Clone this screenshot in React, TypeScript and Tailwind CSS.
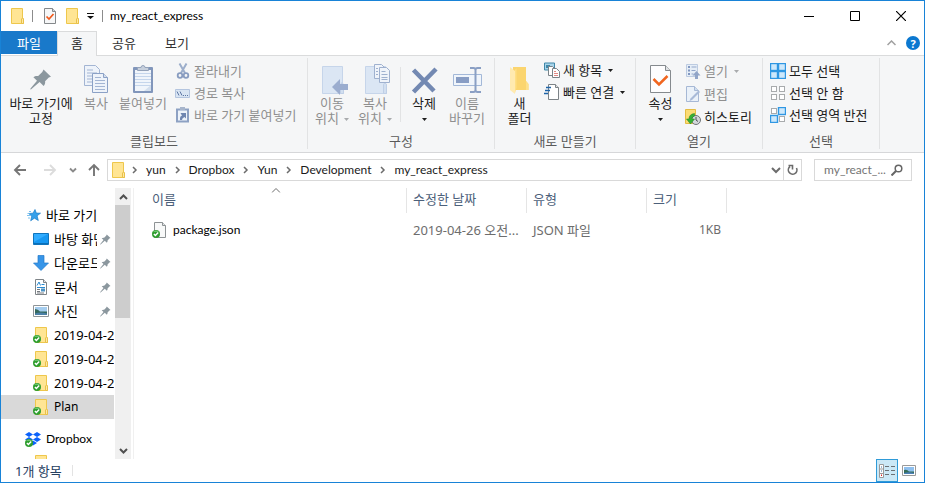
import React from "react";

type Kids = { children?: React.ReactNode };

const latin = "text-xs font-['Lato','Noto_Sans_CJK_KR',sans-serif]";

/* ---------- icons ---------- */

function FolderIcon({ synced = false }: { synced?: boolean }) {
  return (
    <svg width="16" height="18" viewBox="0 0 16 18" className="shrink-0" aria-hidden="true">
      <path d="M2.5 1.5h11v9.5l1 1v4.5h-12z" fill="#ffe594" stroke="#eec74c" />
      <path d="M12.5 16.5v-4.5l1-1 1 1v4.5z" fill="#ffe9a2" stroke="#e8c04a" />
      {synced && <SyncMark />}
    </svg>
  );
}

function SyncMark() {
  return (
    <g>
      <circle cx="4" cy="13" r="4" fill="#2f9e2f" />
      <path d="M0.8 11a4 4 0 0 1 6.4 0z" fill="#6cc46c" />
      <path d="M1.9 13l1.5 1.6L6.2 11.6" fill="none" stroke="#fff" strokeWidth="1.4" />
    </g>
  );
}

function FileIcon() {
  return (
    <svg width="16" height="18" viewBox="0 0 16 18" className="shrink-0" aria-hidden="true">
      <path d="M2.5 1.5h8l3 3v12h-11z" fill="#f8f9f9" stroke="#8d9294" />
      <path d="M10.5 1.5v3h3" fill="#e3e6e7" stroke="#8d9294" />
      <SyncMark />
    </svg>
  );
}

function CheckPageSmall() {
  return (
    <svg width="14" height="18" viewBox="0 0 14 18" aria-hidden="true">
      <path d="M1.5 1.5h8l3 3v12h-11z" fill="#f6f7f8" stroke="#84888b" />
      <path d="M9.5 1.5v3h3" fill="#cfd3d6" stroke="#84888b" />
      <path d="M3.5 9.5l2.5 2.5 4.500-5" fill="none" stroke="#f0591b" strokeWidth="1.7" />
    </svg>
  );
}

function Caret({ dim = false }: { dim?: boolean }) {
  return (
    <svg width="5" height="3" viewBox="0 0 5 3" className="inline-block shrink-0" aria-hidden="true">
      <path d="M0 0h5L2.500 3z" fill={dim ? "#a9abad" : "#1d1d1d"} />
    </svg>
  );
}

function PinShape() {
  return (
    <g fill="#8b979e">
      <path d="M13.500 1L21 8.200l-2.200 0.900-3.700 3.700c0.300 2-0.200 3.400-1.500 4.600l-4-3.900L1.200 20.800 0.300 20.900l0.200-1L7 12.200 3.400 8.700C4.700 7.500 6.300 7.200 8.200 7.500L12.300 3.600z" />
    </g>
  );
}

function PinSmall() {
  return (
    <svg width="11" height="11" viewBox="0 0 22 22" className="shrink-0" aria-label="고정됨">
      <PinShape />
    </svg>
  );
}

function BigIcon({ children }: Kids) {
  return (
    <svg width="32" height="32" viewBox="0 0 32 32" aria-hidden="true">
      {children}
    </svg>
  );
}

function SmallIcon({ children }: Kids) {
  return (
    <svg width="16" height="16" viewBox="0 0 16 16" className="shrink-0" aria-hidden="true">
      {children}
    </svg>
  );
}

const PinIcon = () => (
  <BigIcon>
    <g transform="translate(5 4.500)">
      <PinShape />
    </g>
  </BigIcon>
);

const CopyIcon = () => (
  <BigIcon>
    <g stroke="#a3b5d3" fill="#eef3fa">
      <path d="M4.500 1.500h11l4 4v16h-15z" />
      <path d="M7 6h6M7 9h10M7 12h10M7 15h10M7 18h10" fill="none" />
      <path d="M12.500 9.500h11l4 4v15h-15z" stroke="#8ba1c6" />
      <path d="M23.500 9.500v4h4" fill="#d5dfee" stroke="#8ba1c6" />
      <path d="M15 13.500h6M15 16.500h10M15 19.500h10M15 22.500h10M15 25.500h10" fill="none" />
    </g>
  </BigIcon>
);

const PasteIcon = () => (
  <BigIcon>
    <rect x="6" y="3" width="20" height="26" rx="1" fill="#8196bb" />
    <rect x="8" y="6" width="16" height="21" fill="#f0f5fb" />
    <path d="M8 9.500h16M8 12.500h16M8 15.500h16M8 18.500h16M8 21.500h16" stroke="#c5d6ec" />
    <path d="M24 21v6h-7z" fill="#d3dfee" />
    <path d="M10.500 6.500v-3h3.500a2 2 0 0 1 4 0h3.500v3z" fill="#c6cfdc" stroke="#94a3ba" />
  </BigIcon>
);

const MoveToIcon = () => (
  <BigIcon>
    <path d="M6.500 2.500h20v17l1 1v9h-21z" fill="#dbe6f4" stroke="#c6d5ea" />
    <path d="M24.500 29.500v-9l1.500-2 1.500 2v9z" fill="#d2dff0" stroke="#bfcfe6" />
    <path d="M16 23l8-8v5h8v6h-8v5z" fill="#9badcf" />
  </BigIcon>
);

const CopyToIcon = () => (
  <BigIcon>
    <path d="M6.500 2.500h20v17l1 1v9h-21z" fill="#dbe6f4" stroke="#c6d5ea" />
    <path d="M24.500 29.500v-9l1.500-2 1.500 2v9z" fill="#d2dff0" stroke="#bfcfe6" />
    <g fill="#f0f4fa" stroke="#9fb1cf">
      <path d="M15.500 0.500h7l3 3v11h-10z" />
      <path d="M20.500 3.500h7l3 3v12h-10z" />
      <path d="M22.500 7.500h4M22.500 10.500h6M22.500 13.500h6M22.500 15.500h6" fill="none" />
      <path d="M17 4.500h2M17 7.500h2M17 10.500h2" fill="none" />
    </g>
  </BigIcon>
);

const DeleteIcon = () => (
  <BigIcon>
    <path d="M5.500 6L26 27M28 5L5.500 28" stroke="#7389b2" strokeWidth="4.500" fill="none" />
  </BigIcon>
);

const RenameIcon = () => (
  <BigIcon>
    <path d="M2.500 10.500h28v11h-28z" fill="#f0f5fb" stroke="#a3b8d8" />
    <rect x="5" y="13" width="13" height="6" fill="#889dc4" />
    <path d="M19 4h3.500q2 0 2 2v20q0 2-2 2H19M30 4h-3.500q-2 0-2 2v20q0 2 2 2H30" stroke="#8a9fc4" strokeWidth="2" fill="none" />
  </BigIcon>
);

const NewFolderIcon = () => (
  <BigIcon>
    <path d="M9 3h13v14l2.500 3v6H9z" fill="#fbd56f" />
    <path d="M22 17l2.500 3v6H22z" fill="#fde08c" />
    <path d="M6 3l5 4v23l-5-4z" fill="#ffeab0" />
    <path d="M11 6l1.500-2v20L11 29z" fill="#ffdf86" />
  </BigIcon>
);

const PropertiesIcon = () => (
  <BigIcon>
    <path d="M5.500 1.500h15l5 5v22h-20z" fill="#fdfdfe" stroke="#858a8e" />
    <path d="M20.500 1.500v5h5" fill="#dfe2e4" stroke="#858a8e" />
    <path d="M8.500 15l5.500 5.500L22.500 12" fill="none" stroke="#f0651f" strokeWidth="2.500" />
  </BigIcon>
);

const CutIcon = () => (
  <SmallIcon>
    <path d="M4.500 0.500L10 10M11.500 0.500L6 10" stroke="#9caecb" strokeWidth="2" fill="none" />
    <circle cx="5" cy="12.500" r="2.300" fill="none" stroke="#889cc0" strokeWidth="1.800" />
    <circle cx="11" cy="12.500" r="2.300" fill="none" stroke="#889cc0" strokeWidth="1.800" />
  </SmallIcon>
);

const PathIcon = () => (
  <SmallIcon>
    <path d="M0.500 4.500h14v8h-14z" fill="#d9e5f3" stroke="#b4c5df" />
    <path d="M2 6.500l2 4M5 6.500l2 4" stroke="#5e77a4" fill="none" />
    <path d="M8 10h1v1H8zM10 10h1v1h-1zM12 10h1v1h-1z" fill="#5e77a4" />
  </SmallIcon>
);

const PasteShortcutIcon = () => (
  <SmallIcon>
    <path d="M2 2.500h11v12H2z" fill="#edf3fa" stroke="#8da1c3" strokeWidth="2" />
    <path d="M5 0h5v3H5z" fill="#a7b5cb" />
    <path d="M5 13v-2q0-2 2-2.500L5.500 6H11v5.500L9.500 10Q7 11 7 13z" fill="#6f86b0" />
  </SmallIcon>
);

const NewItemIcon = () => (
  <SmallIcon>
    <path d="M0.500 1h10v7h-10z" fill="#a9d4ea" stroke="#3f87a8" />
    <path d="M2 3h4v3H2z" fill="#3f87a8" />
    <path d="M4.500 4.500h4l2 2v7h-6z" fill="#fff" stroke="#7b8388" />
    <path d="M8.500 6.500h4l3 3v6h-7z" fill="#fff" stroke="#7b8388" />
    <path d="M10 9.500h2M10 11.500h4M10 13.500h4" stroke="#e28a86" />
  </SmallIcon>
);

const EasyAccessIcon = () => (
  <SmallIcon>
    <path d="M4.500 0.500h7l3 3v12h-10z" fill="#fff" stroke="#7d8387" />
    <path d="M11.500 0.500v3h3" fill="#dfe2e4" stroke="#7d8387" />
    <path d="M2 3.500h5M1 6.500h5M0 9.500h4" stroke="#1e64a8" strokeWidth="1.500" />
  </SmallIcon>
);

const OpenIcon = () => (
  <SmallIcon>
    <path d="M1.500 1.500h11v12h-11z" fill="#e6eef7" stroke="#bccbe1" />
    <path d="M3 3h2v2H3zM3 6.500h2v2H3zM3 10h2v2H3z" fill="#8197c0" />
    <path d="M6.500 4h5M6.500 7.500h4M6.500 11h2" stroke="#93a7ca" />
    <path d="M11.500 8l4 4.500h-2.500V16h-3v-3.500H7.500z" fill="#91a5c8" />
  </SmallIcon>
);

const EditIcon = () => (
  <SmallIcon>
    <path d="M1.500 0.500h8l4 4v11h-12z" fill="#eaf1f9" stroke="#a6b8d5" />
    <path d="M9.500 0.500v4h4" fill="#d1deee" stroke="#a6b8d5" />
    <path d="M13.500 4.500l1.500 1.500-8 8L4.500 15l1-2.500z" fill="#a8bad8" />
  </SmallIcon>
);

const HistoryIcon = () => (
  <SmallIcon>
    <path d="M0.500 0.500h10v14h-10z" fill="#fbdc75" stroke="#e4bc43" />
    <circle cx="11" cy="11" r="4.500" fill="#d3d7da" stroke="#6e7478" />
    <path d="M11 8v3l2 1.500" stroke="#4b5054" fill="none" />
    <path d="M9.500 4.500Q4 5 4 10H1.500L5.500 15l4-5H7q0-2.500 2.500-3z" fill="#36b035" stroke="#1c8420" strokeWidth="0.500" />
  </SmallIcon>
);

function SelectIcon({ on }: { on: boolean[] }) {
  const spots = [[1, 1], [9, 1], [1, 9], [9, 9]];
  return (
    <SmallIcon>
      {spots.map(([x, y], i) =>
        on[i] ? (
          <rect key={i} x={x - 0.5} y={y - 0.5} width="7" height="7" fill="#cde8fb" stroke="#2f97e3" strokeWidth="1.400" />
        ) : (
          <rect key={i} x={x + 0.5} y={y + 0.5} width="5" height="5" fill="#fff" stroke="#a8abad" />
        ),
      )}
    </SmallIcon>
  );
}

const StarIcon = () => (
  <SmallIcon>
    <path d="M9 2.500l1.300 3.600 4.200.1-3.400 2.600 1.200 4.700-3.900-2.300-3.700 2.600 1-4.500L2.800 6.500l4.200-.3z" fill="#35a0ea" stroke="#1a7cc9" strokeWidth="0.700" />
    <path d="M1.500 6.500h2M1 8.500h3M2 11h2M3 4.500h2" stroke="#7cc2f0" />
  </SmallIcon>
);

const DesktopIcon = () => (
  <SmallIcon>
    <path d="M0.500 2.500h15v11h-15z" fill="#1798f2" stroke="#1074bc" />
    <path d="M1 3h14L1 11z" fill="#31acff" />
    <path d="M1 12.500h14" stroke="#0a6fb8" />
  </SmallIcon>
);

const DownloadIcon = () => (
  <SmallIcon>
    <path d="M5 0.500h6V8h4.500L8 15.500 0.500 8H5z" fill="#3795e8" stroke="#2379c9" strokeWidth="0.700" />
  </SmallIcon>
);

const DocumentIcon = () => (
  <SmallIcon>
    <path d="M2.500 0.500h8l3 3v12h-11z" fill="#fff" stroke="#7e8488" />
    <path d="M10.500 0.500v3h3" fill="#e1e4e6" stroke="#7e8488" />
    <path d="M4 6.500l2-3.500 1.500 3.500M8.500 5.500h3M4 8.500h8" stroke="#2a8ad0" fill="none" />
    <path d="M4 10.500h3M4 12.500h3M4 14h7" stroke="#767b80" />
    <path d="M8 9.500h4v3H8z" fill="#4d93c4" />
  </SmallIcon>
);

const PictureIcon = () => (
  <SmallIcon>
    <path d="M0.500 2.500h15v11h-15z" fill="#fff" stroke="#8e9498" />
    <path d="M2 4h12v8H2z" fill="#a5cdef" />
    <path d="M2 6q3 0 5 2.500h7V12H2z" fill="#35685c" />
    <path d="M2 10.500q5-2 12 0V12H2z" fill="#4b80a7" />
  </SmallIcon>
);

const DropboxIcon = () => (
  <SmallIcon>
    <path d="M4 1l4 2.500L4 6 0 3.500zM12 1l4 2.500L12 6 8 3.500zM4 6l4 2.500L4 11 0 8.500zM12 6l4 2.500L12 11 8 8.500zM8 9.500l4 2.500-4 2.500L4 12z" fill="#0b62fb" />
    <g transform="translate(0 -1)">
      <SyncMark />
    </g>
  </SmallIcon>
);

/* ---------- ribbon ---------- */

function Group({ label, className, children }: Kids & { label: string; className: string }) {
  return (
    <section className={`flex h-[91px] shrink-0 flex-col border-r border-[#e2e3e4] ${className}`} aria-label={label}>
      <div className="flex h-[75px]">{children}</div>
      <div className="text-center leading-[16px] text-[#5a5a5a]">{label}</div>
    </section>
  );
}

function BigButton({ icon, label, className, dim = false, caret = "none" }: {
  icon: React.ReactNode; label: string; className: string; dim?: boolean; caret?: "none" | "inline" | "below";
}) {
  return (
    <button type="button" disabled={dim} className={`flex flex-col items-center pt-[6px] ${className} ${dim ? "text-[#8f8f8f]" : "text-[#1d1d1d]"}`}>
      {icon}
      <span className="whitespace-pre text-center leading-[15px]">
        {label}
        {caret === "inline" && <span className="pl-[5px]"><Caret dim={dim} /></span>}
      </span>
      {caret === "below" && <span className="flex h-[17px] items-center"><Caret dim={dim} /></span>}
    </button>
  );
}

function SmallButton({ icon, label, dim = false, caret = false }: {
  icon: React.ReactNode; label: string; dim?: boolean; caret?: boolean;
}) {
  return (
    <button type="button" disabled={dim} className={`flex h-[22px] items-center gap-[3px] whitespace-nowrap ${dim ? "text-[#8f8f8f]" : "text-[#1d1d1d]"}`}>
      {icon}
      <span>{label}</span>
      {caret && <span className="flex pl-[3px]"><Caret dim={dim} /></span>}
    </button>
  );
}

function Ribbon() {
  return (
    <div className="flex h-[97px] shrink-0 overflow-hidden border-b border-[#d6d7d9] bg-[#f5f6f7] pt-[2px]">
      <Group label="클립보드" className="w-[307px]">
        <BigButton icon={<PinIcon />} label={"바로 가기에\n고정"} className="w-[80px]" />
        <BigButton icon={<CopyIcon />} label="복사" className="w-[30px]" dim />
        <BigButton icon={<PasteIcon />} label="붙여넣기" className="w-[64px]" dim />
        <div className="flex flex-col pt-[2px]">
          <SmallButton icon={<CutIcon />} label="잘라내기" dim />
          <SmallButton icon={<PathIcon />} label="경로 복사" dim />
          <SmallButton icon={<PasteShortcutIcon />} label="바로 가기 붙여넣기" dim />
        </div>
      </Group>
      <Group label="구성" className="w-[187px]">
        <BigButton icon={<MoveToIcon />} label={"이동\n위치"} className="w-[48px]" dim caret="inline" />
        <BigButton icon={<CopyToIcon />} label={"복사\n위치"} className="w-[38px]" dim caret="inline" />
        <div className="ml-[6px] mt-[9px] h-[55px] w-px bg-[#e2e3e4]" />
        <BigButton icon={<DeleteIcon />} label="삭제" className="w-[46px]" caret="below" />
        <BigButton icon={<RenameIcon />} label={"이름\n바꾸기"} className="w-[40px]" dim />
      </Group>
      <Group label="새로 만들기" className="w-[141px]">
        <BigButton icon={<NewFolderIcon />} label={"새\n폴더"} className="w-[49px]" />
        <div className="flex flex-col pt-px">
          <SmallButton icon={<NewItemIcon />} label="새 항목" caret />
          <SmallButton icon={<EasyAccessIcon />} label="빠른 연결" caret />
        </div>
      </Group>
      <Group label="열기" className="w-[127px]">
        <BigButton icon={<PropertiesIcon />} label="속성" className="w-[49px]" caret="below" />
        <div className="flex flex-col gap-px pt-[2px]">
          <SmallButton icon={<OpenIcon />} label="열기" dim caret />
          <SmallButton icon={<EditIcon />} label="편집" dim />
          <SmallButton icon={<HistoryIcon />} label="히스토리" />
        </div>
      </Group>
      <Group label="선택" className="w-[117px]">
        <div className="flex flex-col pl-[7px] pt-[2px]">
          <SmallButton icon={<SelectIcon on={[true, true, true, true]} />} label="모두 선택" />
          <SmallButton icon={<SelectIcon on={[false, false, false, false]} />} label="선택 안 함" />
          <SmallButton icon={<SelectIcon on={[false, true, true, false]} />} label="선택 영역 반전" />
        </div>
      </Group>
    </div>
  );
}

/* ---------- title bar and tabs ---------- */

function TitleBar() {
  return (
    <header className="flex h-[30px] shrink-0 items-center bg-white">
      <span className="pl-[8px]"><FolderIcon /></span>
      <span className="ml-[7px] h-[12px] w-px bg-[#8c8c8c]" />
      <button type="button" aria-label="속성" className="ml-[10px]"><CheckPageSmall /></button>
      <button type="button" aria-label="새 폴더" className="ml-[7px]"><FolderIcon /></button>
      <button type="button" aria-label="빠른 실행 도구 모음 사용자 지정" className="ml-[7px]">
        <svg width="7" height="6" viewBox="0 0 7 6" aria-hidden="true">
          <path d="M0 0h7v1H0zM0 3h7L3.500 6z" fill="#111" />
        </svg>
      </button>
      <span className="ml-[8px] h-[12px] w-px bg-[#8c8c8c]" />
      <h1 className={`ml-[7px] ${latin} text-black`}>my_react_express</h1>
      <div className="ml-auto flex h-full">
        <button type="button" aria-label="최소화" className="flex w-[46px] items-center justify-center">
          <svg width="10" height="10" viewBox="0 0 10 10" aria-hidden="true"><path d="M0 5.500h10" stroke="#000" /></svg>
        </button>
        <button type="button" aria-label="최대화" className="flex w-[46px] items-center justify-center">
          <svg width="10" height="10" viewBox="0 0 10 10" aria-hidden="true"><path d="M0.500 0.500h9v9h-9z" stroke="#000" fill="none" /></svg>
        </button>
        <button type="button" aria-label="닫기" className="flex w-[46px] items-center justify-center">
          <svg width="10" height="10" viewBox="0 0 10 10" aria-hidden="true"><path d="M0 0l10 10M10 0L0 10" stroke="#000" strokeWidth="1.200" /></svg>
        </button>
      </div>
    </header>
  );
}

function Tabs() {
  return (
    <div className="flex h-[25px] shrink-0 border-b border-[#dadbdc] bg-white">
      <button type="button" className="h-[23px] w-[56px] bg-[#1979ca] text-white">파일</button>
      <button type="button" className="-mb-px h-[25px] w-[40px] border border-b-0 border-[#dadbdc] bg-[#f5f6f7] pb-[2px] text-[#1d1d1d]">홈</button>
      <button type="button" className="h-[23px] w-[54px] text-[#333]">공유</button>
      <button type="button" className="h-[23px] w-[52px] text-[#333]">보기</button>
      <div className="ml-auto flex items-center gap-[10px] pr-[4px]">
        <button type="button" aria-label="리본 최소화">
          <svg width="9" height="6" viewBox="0 0 9 6" aria-hidden="true"><path d="M0.500 5l4-4 4 4" stroke="#a0a0a0" strokeWidth="1.500" fill="none" /></svg>
        </button>
        <button type="button" aria-label="도움말" className="flex h-[14px] w-[14px] items-center justify-center rounded-full bg-[#0b78d0] text-[11px] font-bold leading-none text-white">?</button>
      </div>
    </div>
  );
}

/* ---------- address row ---------- */

function Arrow({ d, color, label, width }: { d: string; color: string; label: string; width: string }) {
  return (
    <button type="button" aria-label={label} className={`flex justify-center ${width}`}>
      <svg width="14" height="14" viewBox="0 0 14 14" aria-hidden="true">
        <path d={d} stroke={color} strokeWidth="1.900" fill="none" />
      </svg>
    </button>
  );
}

function AddressRow() {
  const path = ["yun", "Dropbox", "Yun", "Development", "my_react_express"];
  return (
    <div className="flex h-[35px] shrink-0 items-center bg-white pb-px pr-[12px]">
      <Arrow label="뒤로" color="#767676" width="w-[38px]" d="M13 7H2M7 2L2 7l5 5" />
      <Arrow label="앞으로" color="#dcdcdc" width="w-[22px]" d="M1 7h11M7 2l5 5-5 5" />
      <Arrow label="최근 위치" color="#8a8a8a" width="w-[24px]" d="M4 5.500l3 3 3-3" />
      <Arrow label="위로" color="#767676" width="w-[18px]" d="M7 13V2M2 7l5-5 5 5" />
      <nav className="ml-[4px] flex h-[22px] min-w-0 flex-1 items-center border border-[#d9d9d9] pl-[2px]" aria-label="경로">
        <FolderIcon />
        {path.map((part, i) => (
          <React.Fragment key={part}>
            <svg width="23" height="8" viewBox="0 0 23 8" className={i === 0 ? "-ml-[3px] shrink-0" : "shrink-0"} aria-hidden="true">
              <path d="M10 1l3 3-3 3" stroke="#6c6c6c" strokeWidth="1.500" fill="none" />
            </svg>
            <a href="#" className={`${latin} text-[#1a1a1a]`}>{part}</a>
          </React.Fragment>
        ))}
        <button type="button" aria-label="이전 위치" className="ml-auto flex w-[14px] justify-center">
          <svg width="10" height="7" viewBox="0 0 10 7" aria-hidden="true"><path d="M1 1l4 4 4-4" stroke="#6c6c6c" strokeWidth="2" fill="none" /></svg>
        </button>
        <button type="button" aria-label="새로 고침" className="flex h-full w-[18px] items-center justify-center border-l border-[#d9d9d9]">
          <svg width="12" height="12" viewBox="0 0 12 12" aria-hidden="true">
            <path d="M3 2.500a4.300 4.300 0 1 0 6.500 1.500M1.500 1.500h4v4" stroke="#6c6c6c" strokeWidth="1.600" fill="none" />
          </svg>
        </button>
      </nav>
      <form className="ml-[12px] flex h-[22px] w-[98px] items-center border border-[#d9d9d9] pl-[9px] pr-[8px]">
        <input aria-label="my_react_express 검색" placeholder="my_react_..." className={`min-w-0 flex-1 bg-transparent ${latin} outline-none placeholder:text-[#757575]`} />
        <svg width="12" height="12" viewBox="0 0 12 12" className="shrink-0" aria-hidden="true">
          <circle cx="7.500" cy="4.500" r="3.300" stroke="#666" strokeWidth="1.500" fill="none" />
          <path d="M5 7l-4.500 4.500" stroke="#666" strokeWidth="2" />
        </svg>
      </form>
    </div>
  );
}

/* ---------- navigation pane ---------- */

function PinnedItem({ icon, label }: { icon: React.ReactNode; label: string }) {
  return (
    <li className="flex h-[24px] shrink-0 items-center pl-[32px] pr-[3px]">
      {icon}
      <a href="#" className="ml-[5px] w-[44px] overflow-hidden whitespace-nowrap">{label}</a>
      <span className="ml-[3px] flex"><PinSmall /></span>
    </li>
  );
}

function FolderItem({ label, active = false }: { label: string; active?: boolean }) {
  return (
    <li className={`flex h-[24px] shrink-0 items-center overflow-hidden pl-[32px] ${active ? "bg-[#d9d9d9]" : ""}`}>
      <FolderIcon synced />
      <a href="#" className={active ? "ml-[5px] text-xs" : "ml-[5px] whitespace-nowrap"}>{label}</a>
    </li>
  );
}

function Sidebar() {
  return (
    <aside className="flex w-[133px] shrink-0 border-r border-[#f0f0f0]">
      <ul className="flex w-[113px] flex-col overflow-hidden pt-[15px] text-black">
        <li className="flex h-[24px] shrink-0 items-center pl-[25px]">
          <StarIcon />
          <a href="#" className="ml-[4px] whitespace-nowrap">바로 가기</a>
        </li>
        <PinnedItem icon={<DesktopIcon />} label="바탕 화면" />
        <PinnedItem icon={<DownloadIcon />} label="다운로드" />
        <PinnedItem icon={<DocumentIcon />} label="문서" />
        <PinnedItem icon={<PictureIcon />} label="사진" />
        <FolderItem label="2019-04-20" />
        <FolderItem label="2019-04-2" />
        <FolderItem label="2019-04-2" />
        <FolderItem label="Plan" active />
        <li className="mt-[8px] flex h-[24px] shrink-0 items-center pl-[24px]">
          <DropboxIcon />
          <a href="#" className={`ml-[5px] ${latin}`}>Dropbox</a>
        </li>
        <FolderItem label="" />
      </ul>
      <div className="ml-px flex w-[16px] flex-col bg-[#f0f0f0]">
        <button type="button" aria-label="위로 스크롤" className="flex h-[17px] items-center justify-center">
          <svg width="9" height="6" viewBox="0 0 9 6" aria-hidden="true"><path d="M1 5l3.500-3.500L8 5" stroke="#505050" strokeWidth="2" fill="none" /></svg>
        </button>
        <div className="h-[113px] w-[15px] bg-[#cdcdcd]" />
        <button type="button" aria-label="아래로 스크롤" className="mt-auto flex h-[17px] items-center justify-center">
          <svg width="9" height="6" viewBox="0 0 9 6" aria-hidden="true"><path d="M1 1l3.500 3.500L8 1" stroke="#505050" strokeWidth="2" fill="none" /></svg>
        </button>
      </div>
    </aside>
  );
}

/* ---------- file list ---------- */

function FileList() {
  const th = "relative h-[25px] border-r border-[#e5e5e5] px-[6px] pb-[3px] text-left font-normal text-[#4c607a]";
  const td = "h-[34px] whitespace-nowrap px-[6px] text-[#6d6d6d]";
  return (
    <main className="min-w-0 flex-1 pl-[12px]">
      <table className="w-[581px] table-fixed border-separate border-spacing-0">
        <thead>
          <tr>
            <th scope="col" className={`w-[261px] ${th}`}>
              이름
              <svg width="9" height="5" viewBox="0 0 9 5" className="absolute left-1/2 top-0 -translate-x-1/2" aria-hidden="true">
                <path d="M0.500 4.500l4-4 4 4" stroke="#6d6d6d" fill="none" />
              </svg>
            </th>
            <th scope="col" className={`w-[120px] ${th}`}>수정한 날짜</th>
            <th scope="col" className={`w-[120px] ${th}`}>유형</th>
            <th scope="col" className={`w-[80px] ${th}`}>크기</th>
          </tr>
        </thead>
        <tbody>
          <tr>
            <td className={td}>
              <a href="#" className={`flex items-center gap-[5px] ${latin} text-black`}>
                <FileIcon />
                package.json
              </a>
            </td>
            <td className={td}>2019-04-26 오전...</td>
            <td className={td}>JSON 파일</td>
            <td className={`${td} text-right text-xs`}>1KB</td>
          </tr>
        </tbody>
      </table>
    </main>
  );
}

function StatusBar() {
  return (
    <footer className="flex h-[23px] shrink-0 items-center pl-[14px] pr-[8px] text-[#26405f]">
      <span>1개 항목</span>
      <span className="ml-[10px] h-[11px] w-px bg-[#e3e3e3]" />
      <div className="ml-auto flex h-full items-center gap-[4px]">
        <button type="button" aria-label="자세히" className="flex h-full w-[22px] items-center justify-center border border-[#2f9bd8] bg-[#cbe8f6]">
          <svg width="16" height="14" viewBox="0 0 16 14" aria-hidden="true">
            <path d="M0.500 0.500h4v13h-4zM0.500 5h4M0.500 9.500h4" fill="#fff" stroke="#9a9a9a" />
            <path d="M6 2.500h4M12 2.500h4M6 6.500h4M12 6.500h4M6 10.500h4M12 10.500h4" stroke="#6b7074" />
            <path d="M2 2.500h1v1H2zM2 6.500h1v1H2z" fill="#3a72a4" />
            <path d="M2 10.500h1v1.500H2z" fill="#d22" />
          </svg>
        </button>
        <button type="button" aria-label="큰 아이콘" className="flex">
          <svg width="14" height="11" viewBox="0 0 14 11" aria-hidden="true">
            <path d="M0.500 0.500h13v10h-13z" fill="#fff" stroke="#9a9a9a" />
            <path d="M2 2h10v7H2z" fill="#8fc0ef" />
            <path d="M2 5q3-1 5 1.500h5V9H2z" fill="#356d58" />
            <path d="M2 8q5-1.500 10 0v1H2z" fill="#4b80b7" />
          </svg>
        </button>
      </div>
    </footer>
  );
}

export default function App() {
  return (
    <div className="flex h-screen flex-col overflow-hidden border border-[#1883d7] bg-white font-['Noto_Sans','Noto_Sans_CJK_KR',sans-serif] text-[13px] leading-[18px]">
      <TitleBar />
      <Tabs />
      <Ribbon />
      <AddressRow />
      <div className="flex min-h-0 flex-1">
        <Sidebar />
        <FileList />
      </div>
      <StatusBar />
    </div>
  );
}
